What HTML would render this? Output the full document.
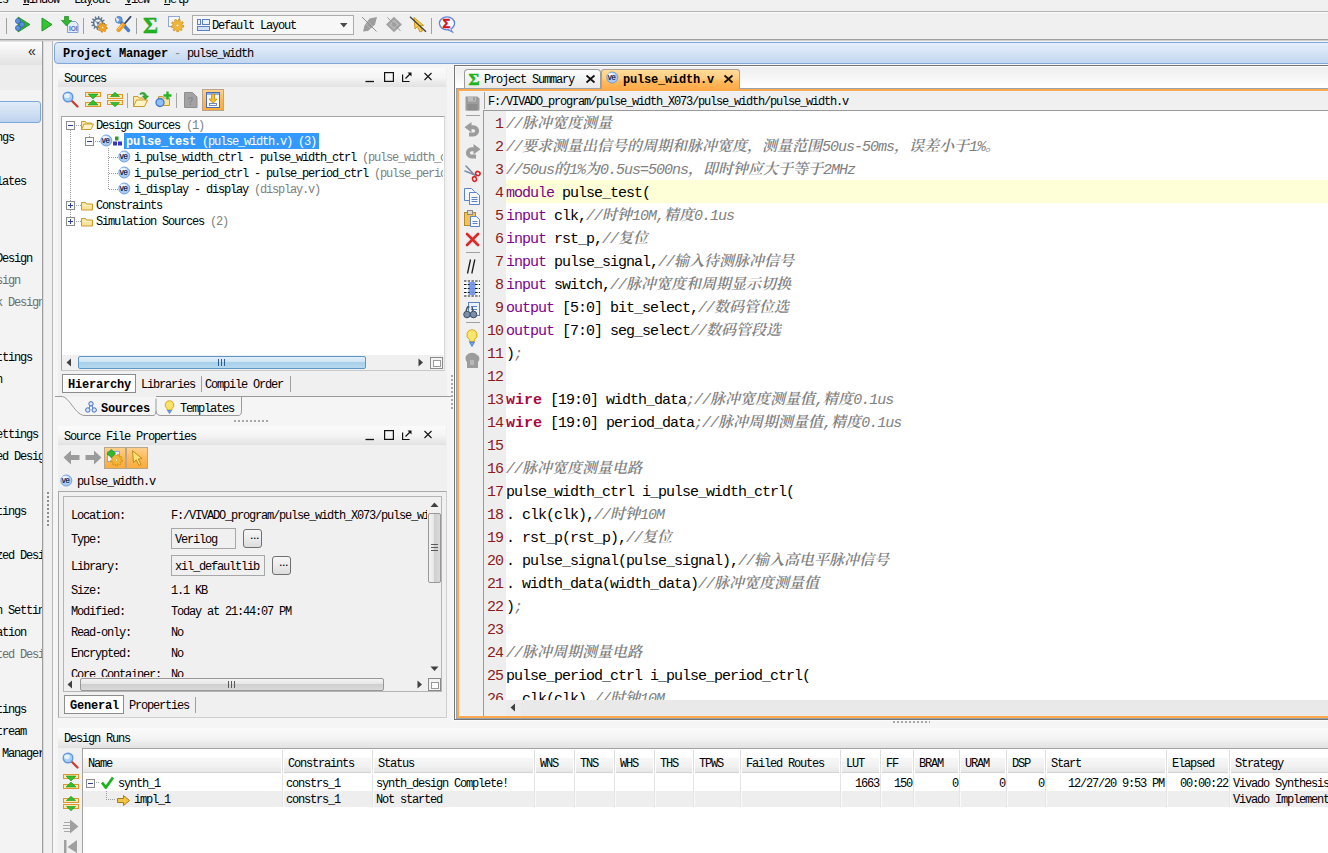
<!DOCTYPE html>
<html lang="zh"><head><meta charset="utf-8"><title>Vivado - pulse_width</title>
<style>
html,body{margin:0;padding:0}
body{width:1328px;height:853px;overflow:hidden;background:#f0f0f0;position:relative;
 font-family:"Liberation Mono","Noto Serif CJK SC",monospace;font-size:12px;color:#000}
#root{position:absolute;left:0;top:0;width:1328px;height:853px;overflow:hidden}
#root div,#root svg,#root span.a{position:absolute;box-sizing:border-box}
.t{margin-top:-1px;font:12px/12px "Liberation Mono","Noto Serif CJK SC",monospace;letter-spacing:-1.2px;white-space:pre;color:#000}
.t.b,.t .b{font-weight:bold;letter-spacing:-0.2px}
.g{color:#808080}
.c{font:15px/23px "Liberation Mono","Noto Serif CJK SC",monospace;letter-spacing:-1px;white-space:pre;color:#000}
.c i{color:#808080}
.c b{color:#800090;font-weight:normal}
.c em{color:#a8093f;font-weight:bold;font-style:normal}
.ln{font:15px/23px "Liberation Mono",monospace;letter-spacing:-1px;color:#8b1a1a;text-align:right;white-space:pre}

.c u{text-decoration:none;letter-spacing:0;font-weight:600}
.c s{text-decoration:none;color:#808080;font-style:italic}
.c em{letter-spacing:0}
</style></head>
<body><div id="root">
<!-- top -->
<div style="left:0px;top:0px;width:1328px;height:11px;background:#f0f0f0;overflow:hidden"><div class="t" style="left:-4px;top:-5px;">ts</div><div class="t" style="left:23px;top:-5px;"><u>W</u>indow</div><div class="t" style="left:74px;top:-5px;">La<u>y</u>out</div><div class="t" style="left:125px;top:-5px;"><u>V</u>iew</div><div class="t" style="left:164px;top:-5px;"><u>H</u>elp</div></div>
<div style="left:0px;top:11px;width:1328px;height:1px;background:#b4b4b4"></div>
<div style="left:0px;top:12px;width:1328px;height:1px;background:#fafafa"></div>
<div style="left:0px;top:13px;width:1328px;height:26px;background:#f0f0f0"></div>
<div style="left:0px;top:39px;width:1328px;height:1px;background:#a0a0a0"></div>
<div style="left:0px;top:40px;width:1328px;height:1px;background:#cfcfcf"></div>
<div style="left:0px;top:41px;width:1328px;height:1px;background:#e3e3e3"></div>
<div style="left:6px;top:18px;width:1px;height:16px;background:#a0a0a0"></div>
<div style="left:83px;top:18px;width:1px;height:16px;background:#a0a0a0"></div>
<div style="left:136px;top:18px;width:1px;height:16px;background:#a0a0a0"></div>
<div style="left:431px;top:18px;width:1px;height:16px;background:#a0a0a0"></div>
<svg style="left:14px;top:16px" width="17" height="17" viewBox="0 0 17 17"><polygon points="4,1 16,8.5 4,16" fill="#2db52d" stroke="#1e8a1e" stroke-width="0.8"/>
<circle cx="4" cy="5" r="2.6" fill="#5b8fe0" stroke="#2a55a8" stroke-width="0.6"/><circle cx="8" cy="8.5" r="2.6" fill="#5b8fe0" stroke="#2a55a8" stroke-width="0.6"/><circle cx="4" cy="12" r="2.6" fill="#5b8fe0" stroke="#2a55a8" stroke-width="0.6"/></svg>
<svg style="left:41px;top:17px" width="12" height="15" viewBox="0 0 12 15"><polygon points="1,1 11,7.5 1,14" fill="#36c336" stroke="#1f9a1f" stroke-width="1"/></svg>
<svg style="left:61px;top:16px" width="18" height="17" viewBox="0 0 18 17"><path d="M6.500,5.500 h8 l2.500,2.500 v8.500 h-10.500z" fill="#e4edfb" stroke="#7f9fd6" stroke-width="1"/>
<text x="8" y="15" font-size="6.500" font-family="Liberation Sans,sans-serif" fill="#4a6fc0" font-weight="bold">IOI</text>
<path d="M3.5,0.5 h4 v4 h3 l-5,5.5 l-5,-5.5 h3z" fill="#2fb52f" stroke="#1c8a1c" stroke-width="0.7"/></svg>
<svg style="left:91px;top:16px" width="17" height="17" viewBox="0 0 17 17"><path d="M14.00,7.00 L13.85,8.46 L12.02,8.35 L11.53,9.55 L13.06,10.50 L12.20,11.68 L10.68,10.68 L9.65,11.48 L10.50,13.06 L9.16,13.66 L8.35,12.02 L7.05,12.20 L7.00,14.00 L5.54,13.85 L5.65,12.02 L4.45,11.53 L3.50,13.06 L2.32,12.20 L3.32,10.68 L2.52,9.65 L0.94,10.50 L0.34,9.16 L1.98,8.35 L1.80,7.05 L0.00,7.00 L0.15,5.54 L1.98,5.65 L2.47,4.45 L0.94,3.50 L1.80,2.32 L3.32,3.32 L4.35,2.52 L3.50,0.94 L4.84,0.34 L5.65,1.98 L6.95,1.80 L7.00,0.00 L8.46,0.15 L8.35,1.98 L9.55,2.47 L10.50,0.94 L11.68,1.80 L10.68,3.32 L11.48,4.35 L13.06,3.50 L13.66,4.84 L12.02,5.65 L12.20,6.95z" fill="#5f7890"/><circle cx="7" cy="7" r="3.600" fill="#eef1f4"/><circle cx="7" cy="7" r="1.300" fill="#5f7890"/><path d="M7,7 L3,4 M7,7 L11,4 M7,7 L7,12" stroke="#5f7890" stroke-width="0.900"/><path d="M16.30,11.50 L16.07,12.98 L14.83,12.88 L14.09,14.01 L14.89,14.89 L13.68,15.78 L12.88,14.83 L11.56,15.10 L11.50,16.30 L10.02,16.07 L10.12,14.83 L8.99,14.09 L8.11,14.89 L7.22,13.68 L8.17,12.88 L7.90,11.56 L6.70,11.50 L6.93,10.02 L8.17,10.12 L8.91,8.99 L8.11,8.11 L9.32,7.22 L10.12,8.17 L11.44,7.90 L11.50,6.70 L12.98,6.93 L12.88,8.17 L14.01,8.91 L14.89,8.11 L15.78,9.32 L14.83,10.12 L15.10,11.44z" fill="#f5a21c" stroke="#c87406" stroke-width="0.600"/><circle cx="11.500" cy="11.500" r="1.200" fill="#fff0c0" stroke="#c87406" stroke-width="0.500"/></svg>
<svg style="left:115px;top:16px" width="17" height="17" viewBox="0 0 17 17"><path d="M4.500,4.500 L13.500,14.500" stroke="#4f7fc4" stroke-width="3.400" stroke-linecap="round"/>
<circle cx="3.800" cy="3.800" r="3.400" fill="#6a9ae0" stroke="#3b66ad" stroke-width="0.700"/><path d="M0.500,0.500 L4.300,3.800 L2,6.500z" fill="#f0f0f0"/>
<path d="M15.500,0.800 L8.500,9" stroke="#33486b" stroke-width="1.800" stroke-linecap="round"/>
<path d="M8,9 L3.500,14" stroke="#f59b1e" stroke-width="4.200" stroke-linecap="round"/><path d="M7.200,8.600 L3.300,13" stroke="#ffd089" stroke-width="1" stroke-linecap="round"/></svg>
<svg style="left:142px;top:14px" width="20" height="22" viewBox="0 0 20 22"><text x="1" y="19" font-size="23" font-weight="bold" font-family="Liberation Serif,serif" fill="#1fb61f" stroke="#179a17" stroke-width="0.400">Σ</text></svg>
<svg style="left:167px;top:16px" width="18" height="17" viewBox="0 0 18 17"><rect x="1.500" y="0.500" width="11" height="10" fill="#f6f8fd" stroke="#8fa6d6"/><path d="M16.80,9.50 L16.56,11.24 L14.92,11.11 L14.14,12.47 L15.33,13.55 L14.02,14.72 L12.85,13.57 L11.38,14.12 L11.59,15.70 L9.84,15.77 L9.68,14.13 L8.21,13.60 L7.35,14.96 L5.97,13.88 L6.90,12.52 L6.11,11.17 L4.58,11.65 L4.22,9.94 L5.80,9.50 L6.06,7.95 L4.58,7.35 L5.40,5.80 L6.90,6.48 L8.09,5.46 L7.35,4.04 L8.98,3.39 L9.68,4.87 L11.25,4.86 L11.59,3.30 L13.26,3.84 L12.85,5.43 L14.06,6.43 L15.33,5.45 L16.26,6.94 L14.92,7.89 L15.20,9.43z" fill="#f2b736" stroke="#c98d12" stroke-width="0.700"/><circle cx="10.500" cy="9.500" r="1.400" fill="#fff3c4" stroke="#c98d12" stroke-width="0.500"/></svg>
<div style="left:192px;top:15px;width:162px;height:20px;border:1px solid #ababab;background:#f7f7f7"></div>
<svg style="left:197px;top:19px" width="13" height="12" viewBox="0 0 13 12"><rect x="0.5" y="0.5" width="3" height="5" fill="#eaf1fb" stroke="#5b7fc0"/><rect x="5.5" y="0.5" width="7" height="5" fill="#eaf1fb" stroke="#5b7fc0"/><rect x="0.5" y="7.5" width="12" height="4" fill="#cfe2f8" stroke="#5b7fc0"/></svg>
<div class="t" style="left:212px;top:21px;">Default Layout</div>
<svg style="left:340px;top:23px" width="8" height="5" viewBox="0 0 8 5"><polygon points="0,0 7.500,0 3.750,4.500" fill="#4a4a4a"/></svg>
<svg style="left:361px;top:16px" width="18" height="17" viewBox="0 0 18 17"><path d="M8.500,2.500 L16,1 L14,8.500 L7,15 L2,15.500 L3.500,9.500z" fill="#9d9d9d"/><path d="M5,8 L9,12 M7,5.500 L11.500,10" stroke="#b9b9b9" stroke-width="0.800"/><path d="M1,1 L15.500,15.500" stroke="#8f8f8f" stroke-width="1"/></svg>
<svg style="left:385px;top:16px" width="18" height="17" viewBox="0 0 18 17"><path d="M9,0.800 L17,8.500 L9,16.200 L1,8.500z" fill="#a2a2a2"/><path d="M9,4.500 L13,8.500 L9,12.500 L5,8.500z" fill="none" stroke="#bcbcbc" stroke-width="1.200"/><path d="M2.500,1.500 L15.500,15" stroke="#9a9a9a" stroke-width="1"/></svg>
<svg style="left:409px;top:16px" width="18" height="17" viewBox="0 0 18 17"><path d="M5,1.500 L6,13 L8.500,10.500 L11,16 L13.500,15 L11,9.800 L14.500,9.500z" fill="#f9cf4e" stroke="#c58f10" stroke-width="0.900"/><path d="M1,0.800 L17,15.800" stroke="#3f3f3f" stroke-width="1.300"/></svg>
<svg style="left:437px;top:15px" width="20" height="19" viewBox="0 0 20 19"><path d="M12.500,12.500 L15.500,17 L9.500,14z" fill="#e8f0fc" stroke="#5f86d6" stroke-width="1.100"/><ellipse cx="10" cy="8.300" rx="7.600" ry="6.500" fill="#f6f9ff" stroke="#5f86d6" stroke-width="1.300"/><path d="M11,13.500 L14,15.500 L13,12.500z" fill="#f6f9ff"/><text x="5.500" y="13" font-size="13" font-weight="bold" font-family="Liberation Sans,sans-serif" fill="#d2101e" stroke="#d2101e" stroke-width="0.500">Σ</text></svg>
<!-- leftnav -->
<div style="left:0px;top:42px;width:42px;height:811px;background:#f3f3f3"></div>
<div style="left:0px;top:42px;width:42px;height:23px;background:linear-gradient(#fdfdfd,#e2e2e2)"></div>
<div style="left:0px;top:65px;width:42px;height:25px;background:#ededed"></div>
<div class="t" style="left:28px;top:46px;font:14px/12px Liberation Sans,sans-serif;letter-spacing:0;color:#222">«</div>
<div style="left:42px;top:41px;width:1px;height:812px;background:#9c9c9c"></div>
<div style="left:43px;top:41px;width:1px;height:812px;background:#dcdcdc"></div>
<div style="left:52px;top:41px;width:1px;height:812px;background:#b9b9b9"></div>
<div style="left:53px;top:41px;width:1px;height:812px;background:#e4e4e4"></div>
<div style="left:47px;top:492px;width:2px;height:35px;background-image:linear-gradient(#8f8f8f 50%,transparent 50%);background-size:2px 4px"></div>
<div style="left:-6px;top:101px;width:47px;height:22px;border:1px solid #7da6da;border-radius:3px;background:linear-gradient(#e0ebf8,#cfdff3 55%,#bdd3ee)"></div>
<div style="left:0px;top:42px;width:42px;height:811px;overflow:hidden"><div class="t" style="left:-82px;top:91px;">Project Settings</div><div class="t" style="left:-82px;top:113px;">Add Sources</div><div class="t" style="left:-82px;top:135px;">Language Templates</div><div class="t" style="left:-82px;top:157px;">IP Catalog</div><div class="t" style="left:-82px;top:212px;">Create Block Design</div><div class="t" style="left:-82px;top:234px;color:#6e6e6e">Open Block Design</div><div class="t" style="left:-82px;top:256px;color:#6e6e6e">Generate Block Design</div><div class="t" style="left:-82px;top:311px;">Simulation Settings</div><div class="t" style="left:-82px;top:333px;">Run Simulation</div><div class="t" style="left:-82px;top:388px;">Elaboration Settings</div><div class="t" style="left:-82px;top:410px;">Open Elaborated Design</div><div class="t" style="left:-82px;top:465px;">Synthesis Settings</div><div class="t" style="left:-82px;top:487px;">Run Synthesis</div><div class="t" style="left:-82px;top:509px;">Open Synthesized Design</div><div class="t" style="left:-82px;top:564px;">Implementation Settings</div><div class="t" style="left:-82px;top:586px;">Run Implementation</div><div class="t" style="left:-82px;top:608px;color:#6e6e6e">Open Implemented Design</div><div class="t" style="left:-82px;top:663px;">Bitstream Settings</div><div class="t" style="left:-82px;top:685px;">Generate Bitstream</div><div class="t" style="left:-82px;top:707px;">Open Hardware Manager</div></div>
<!-- pm -->
<div style="left:53px;top:41px;width:1275px;height:812px;background:#f5f5f5"></div>
<div style="left:58px;top:68px;width:389px;height:329px;background:#f0f0f0"></div>
<div style="left:58px;top:426px;width:389px;height:292px;background:#f0f0f0"></div>
<div style="left:58px;top:728px;width:1270px;height:125px;background:#f0f0f0"></div>
<div style="left:54px;top:42px;width:1290px;height:22px;border:1px solid #7fa7da;border-radius:4px;background:linear-gradient(#e6effb 0%,#d6e4f6 45%,#c3d7f0 100%)"></div>
<div class="t b" style="left:63px;top:49px;">Project Manager</div>
<div class="t" style="left:174px;top:49px;color:#8a8a8a">-</div>
<div class="t" style="left:187px;top:49px;">pulse_width</div>
<!-- sources -->
<div style="left:58px;top:68px;width:388px;height:19px;background:linear-gradient(#fbfbfb,#f4f4f4 50%,#e2e2e2)"></div>
<div class="t" style="left:64px;top:74px;">Sources</div>
<svg style="left:365px;top:71px" width="68" height="12" viewBox="0 0 68 12"><path d="M0.500,10.500 h8.500" stroke="#111" stroke-width="1.300" fill="none"/>
<rect x="19.6" y="1.6" width="8.8" height="8.8" fill="none" stroke="#111" stroke-width="1.2"/>
<path d="M37.600,3.500 v7 h7" stroke="#111" stroke-width="1.2" fill="none"/><path d="M40.500,7.500 L45.500,2.500" stroke="#111" stroke-width="1.3"/><path d="M42.500,1.500 h4 v4z" fill="#111"/>
<path d="M59.500,2 l7,7 M66.500,2 l-7,7" stroke="#111" stroke-width="1.1"/></svg>
<svg style="left:62px;top:91px" width="17" height="17" viewBox="0 0 17 17"><path d="M9,9 L15.500,15.500" stroke="#cf3a2a" stroke-width="2.200" stroke-linecap="round"/><circle cx="6" cy="6" r="4.800" fill="#a6cef8" stroke="#5f97e2" stroke-width="1.400"/><ellipse cx="5" cy="4.800" rx="2.800" ry="2.400" fill="#e4f1ff"/></svg>
<svg style="left:85px;top:92px" width="16" height="16" viewBox="0 0 16 16"><rect x="0.500" y="0.500" width="15" height="4" fill="#fde9ae" stroke="#e0962a"/><rect x="0.500" y="10.500" width="15" height="4" fill="#fde9ae" stroke="#e0962a"/><polygon points="3,2 13,2 8,7" fill="#2fc12f" stroke="#1d961d" stroke-width="0.600"/><polygon points="3,13 13,13 8,8" fill="#2fc12f" stroke="#1d961d" stroke-width="0.600"/></svg>
<svg style="left:107px;top:92px" width="16" height="16" viewBox="0 0 16 16"><rect x="0.500" y="2.500" width="15" height="4" fill="#fde9ae" stroke="#e0962a"/><rect x="0.500" y="8.500" width="15" height="4" fill="#fde9ae" stroke="#e0962a"/><polygon points="3.500,4.500 12.500,4.500 8,0.300" fill="#2fc12f" stroke="#1d961d" stroke-width="0.600"/><polygon points="3.500,10.500 12.500,10.500 8,14.800" fill="#2fc12f" stroke="#1d961d" stroke-width="0.600"/></svg>
<div style="left:127px;top:93px;width:1px;height:15px;background:#a6a6a6"></div>
<svg style="left:133px;top:91px" width="18" height="17" viewBox="0 0 18 17"><path d="M0.5,15.500 v-10 h4.500 l1,1.500 h6 v2" fill="#fbe9a6" stroke="#c99a2e"/><path d="M0.5,15.500 l3,-6.500 h11 l-3,6.500z" fill="#fff3c4" stroke="#c99a2e"/><path d="M7,2.500 c3,-2 6,-1 6.500,2.500 h2 l-3,3.500 l-3,-3.500 h2 c-0.500,-2 -2.500,-2.500 -4.500,-1.500z" fill="#2fb52f" stroke="#1c8a1c" stroke-width="0.6"/></svg>
<svg style="left:155px;top:91px" width="19" height="17" viewBox="0 0 19 17"><path d="M3.500,14.500 v-9 h4 l1,1.500 h6 v7.500z" fill="#fbe39a" stroke="#c99a2e"/><circle cx="5" cy="11.500" r="4" fill="#8fc0f5" stroke="#3f78d0" stroke-width="1.300"/><path d="M12.500,0.500 v8 M8.500,4.500 h8" stroke="#26b526" stroke-width="2.400"/></svg>
<div style="left:176px;top:93px;width:1px;height:15px;background:#a6a6a6"></div>
<svg style="left:184px;top:92px" width="14" height="16" viewBox="0 0 14 16"><path d="M0.5,0.500 h8 l4.500,4.500 v10.500 h-12.500z" fill="#a3a3a3" stroke="#8f8f8f"/><text x="3.200" y="12.500" font-size="10" font-weight="bold" font-family="Liberation Sans,sans-serif" fill="#8b8b8b">?</text></svg>
<div style="left:202px;top:89px;width:22px;height:22px;border:1px solid #b9a58a;background:linear-gradient(#ffd08a,#fdb95a 50%,#fbab3c)"></div>
<svg style="left:206px;top:92px" width="14" height="16" viewBox="0 0 14 16"><rect x="0.5" y="0.5" width="13" height="15" fill="#f8fbff" stroke="#4b6fb5"/><rect x="1" y="1" width="12" height="2" fill="#8fb0e6"/><path d="M5.500,2 h3 v5 h2.500 l-4,4.500 l-4,-4.500 h2.500z" fill="#f5c02a" stroke="#b98608" stroke-width="0.7"/><rect x="3.500" y="11.500" width="7" height="2" fill="#fff" stroke="#4b6fb5" stroke-width="0.8"/></svg>
<div style="left:61px;top:116px;width:384px;height:255px;background:#fff;border:1px solid #a5a5a5;border-right-color:#d8d8d8;border-bottom-color:#c8c8c8"></div>
<div style="left:70px;top:130px;width:1px;height:92px;background-image:linear-gradient(#9a9a9a 50%,transparent 50%);background-size:1px 2px"></div>
<div style="left:76px;top:125px;width:5px;height:1px;background-image:linear-gradient(90deg,#9a9a9a 50%,transparent 50%);background-size:2px 1px"></div>
<div style="left:76px;top:205px;width:5px;height:1px;background-image:linear-gradient(90deg,#9a9a9a 50%,transparent 50%);background-size:2px 1px"></div>
<div style="left:76px;top:221px;width:5px;height:1px;background-image:linear-gradient(90deg,#9a9a9a 50%,transparent 50%);background-size:2px 1px"></div>
<div style="left:89px;top:134px;width:1px;height:3px;background-image:linear-gradient(#9a9a9a 50%,transparent 50%);background-size:1px 2px"></div>
<div style="left:95px;top:141px;width:5px;height:1px;background-image:linear-gradient(90deg,#9a9a9a 50%,transparent 50%);background-size:2px 1px"></div>
<div style="left:108px;top:148px;width:1px;height:42px;background-image:linear-gradient(#9a9a9a 50%,transparent 50%);background-size:1px 2px"></div>
<div style="left:109px;top:157px;width:9px;height:1px;background-image:linear-gradient(90deg,#9a9a9a 50%,transparent 50%);background-size:2px 1px"></div>
<div style="left:109px;top:173px;width:9px;height:1px;background-image:linear-gradient(90deg,#9a9a9a 50%,transparent 50%);background-size:2px 1px"></div>
<div style="left:109px;top:189px;width:9px;height:1px;background-image:linear-gradient(90deg,#9a9a9a 50%,transparent 50%);background-size:2px 1px"></div>
<svg style="left:66px;top:121px" width="9" height="9" viewBox="0 0 9 9"><rect x="0.5" y="0.5" width="8" height="8" fill="#fafafa" stroke="#8c8c8c"/><path d="M2,4.500 h5" stroke="#2f3f8f"/></svg>
<svg style="left:81px;top:120px" width="13" height="11" viewBox="0 0 13 11"><path d="M0.500,9.500 v-8 h4 l1,1.500 h5 v2" fill="#fbe9a6" stroke="#c99a2e"/><path d="M0.500,9.500 l2.500,-5.500 h9.500 l-2.500,5.500z" fill="#fff3c4" stroke="#c99a2e"/></svg>
<div class="t" style="left:96px;top:121px;">Design Sources <span class="g">(1)</span></div>
<svg style="left:85px;top:137px" width="9" height="9" viewBox="0 0 9 9"><rect x="0.5" y="0.5" width="8" height="8" fill="#fafafa" stroke="#8c8c8c"/><path d="M2,4.500 h5" stroke="#2f3f8f"/></svg>
<svg style="left:100px;top:134px" width="13" height="13" viewBox="0 0 13 13"><circle cx="6.300" cy="6.500" r="5.500" fill="#a9cbf3" stroke="#5b8fd8" stroke-width="0.800"/>
<ellipse cx="5.300" cy="5" rx="3.800" ry="3.200" fill="#dcebfc"/><ellipse cx="4.800" cy="4.300" rx="2.300" ry="1.800" fill="#f3f8ff"/>
<text x="1.500" y="9.200" font-size="8.200" font-family="Liberation Sans,sans-serif" font-weight="bold" fill="#22335a" letter-spacing="-0.700">ve</text></svg>
<svg style="left:113px;top:136px" width="10" height="10" viewBox="0 0 10 10"><rect x="2" y="0.500" width="3.500" height="4" fill="#2aa02a"/><rect x="0" y="5.500" width="4" height="4" fill="#3b35c4"/><rect x="5" y="5.500" width="4" height="4" fill="#3b35c4"/></svg>
<div style="left:124px;top:133px;width:195px;height:16px;background:#3399ff"></div>
<div class="t" style="left:126px;top:137px;color:#fff"><b style="letter-spacing:-0.2px">pulse_test</b> (pulse_width.v) (3)</div>
<svg style="left:118px;top:150px" width="13" height="13" viewBox="0 0 13 13"><circle cx="6.300" cy="6.500" r="5.500" fill="#a9cbf3" stroke="#5b8fd8" stroke-width="0.800"/>
<ellipse cx="5.300" cy="5" rx="3.800" ry="3.200" fill="#dcebfc"/><ellipse cx="4.800" cy="4.300" rx="2.300" ry="1.800" fill="#f3f8ff"/>
<text x="1.500" y="9.200" font-size="8.200" font-family="Liberation Sans,sans-serif" font-weight="bold" fill="#22335a" letter-spacing="-0.700">ve</text></svg>
<div class="t" style="left:134px;top:153px;width:309px;overflow:hidden">i_pulse_width_ctrl - pulse_width_ctrl <span class="g">(pulse_width_ctrl.v)</span></div>
<svg style="left:118px;top:166px" width="13" height="13" viewBox="0 0 13 13"><circle cx="6.300" cy="6.500" r="5.500" fill="#a9cbf3" stroke="#5b8fd8" stroke-width="0.800"/>
<ellipse cx="5.300" cy="5" rx="3.800" ry="3.200" fill="#dcebfc"/><ellipse cx="4.800" cy="4.300" rx="2.300" ry="1.800" fill="#f3f8ff"/>
<text x="1.500" y="9.200" font-size="8.200" font-family="Liberation Sans,sans-serif" font-weight="bold" fill="#22335a" letter-spacing="-0.700">ve</text></svg>
<div class="t" style="left:134px;top:169px;width:309px;overflow:hidden">i_pulse_period_ctrl - pulse_period_ctrl <span class="g">(pulse_period_ctrl.v)</span></div>
<svg style="left:118px;top:182px" width="13" height="13" viewBox="0 0 13 13"><circle cx="6.300" cy="6.500" r="5.500" fill="#a9cbf3" stroke="#5b8fd8" stroke-width="0.800"/>
<ellipse cx="5.300" cy="5" rx="3.800" ry="3.200" fill="#dcebfc"/><ellipse cx="4.800" cy="4.300" rx="2.300" ry="1.800" fill="#f3f8ff"/>
<text x="1.500" y="9.200" font-size="8.200" font-family="Liberation Sans,sans-serif" font-weight="bold" fill="#22335a" letter-spacing="-0.700">ve</text></svg>
<div class="t" style="left:134px;top:185px;">i_display - display <span class="g">(display.v)</span></div>
<svg style="left:66px;top:201px" width="9" height="9" viewBox="0 0 9 9"><rect x="0.5" y="0.5" width="8" height="8" fill="#fafafa" stroke="#8c8c8c"/><path d="M2,4.500 h5" stroke="#2f3f8f"/><path d="M4.500,2 v5" stroke="#2f3f8f"/></svg>
<svg style="left:81px;top:201px" width="13" height="10" viewBox="0 0 13 10"><path d="M0.500,9 v-7.500 h4 l1,1.500 h6 v6z" fill="#fbe39a" stroke="#c99a2e"/><path d="M1.500,4.500 h9" stroke="#fff6d4"/></svg>
<div class="t" style="left:96px;top:201px;">Constraints</div>
<svg style="left:66px;top:217px" width="9" height="9" viewBox="0 0 9 9"><rect x="0.5" y="0.5" width="8" height="8" fill="#fafafa" stroke="#8c8c8c"/><path d="M2,4.500 h5" stroke="#2f3f8f"/><path d="M4.500,2 v5" stroke="#2f3f8f"/></svg>
<svg style="left:81px;top:217px" width="13" height="10" viewBox="0 0 13 10"><path d="M0.500,9 v-7.500 h4 l1,1.500 h6 v6z" fill="#fbe39a" stroke="#c99a2e"/><path d="M1.500,4.500 h9" stroke="#fff6d4"/></svg>
<div class="t" style="left:96px;top:217px;">Simulation Sources <span class="g">(2)</span></div>
<div style="left:62px;top:355px;width:382px;height:15px;background:#f0f0f0"></div>
<svg style="left:66px;top:358px" width="6" height="9" viewBox="0 0 6 9"><polygon points="5,0.500 5,8.500 0.500,4.500" fill="#404040"/></svg>
<div style="left:78px;top:356px;width:288px;height:13px;border:1px solid #5b97c6;border-radius:2px;background:linear-gradient(#e2eff9,#cfe4f4 45%,#a8d0ea 50%,#b6d9ef)"></div>
<svg style="left:217px;top:359px" width="10" height="7" viewBox="0 0 10 7"><path d="M1.500,0 v7 M4.500,0 v7 M7.500,0 v7" stroke="#2d5d8c"/></svg>
<svg style="left:418px;top:358px" width="6" height="9" viewBox="0 0 6 9"><polygon points="0.500,0.500 0.500,8.500 5,4.500" fill="#404040"/></svg>
<div style="left:430px;top:357px;width:13px;height:12px;border:1px solid #8a8a8a;background:#f4f4f4"></div>
<div style="left:433px;top:360px;width:8px;height:7px;border:1px solid #9a9a9a;background:#fff"></div>
<div style="left:62px;top:374px;width:74px;height:19px;background:#fff;border:1px solid #8c8c8c"></div>
<div class="t b" style="left:68px;top:380px;">Hierarchy</div>
<div class="t" style="left:141px;top:380px;">Libraries</div>
<div style="left:201px;top:376px;width:1px;height:16px;background:#a0a0a0"></div>
<div class="t" style="left:205px;top:380px;">Compile Order</div>
<div style="left:290px;top:376px;width:1px;height:16px;background:#a0a0a0"></div>
<svg style="left:55px;top:394px" width="400" height="24" viewBox="0 0 400 24"><path d="M0,2.500 H6 C10,2.500 12,5 16,10 S24,21.500 30,21.500 H98 C100,21.500 101,20 101,17 V4.500" fill="none" stroke="#9a9a9a"/>
<path d="M101,17 C101,20 103,21.500 106,21.500 H183 C185.500,21.500 186.500,20 186.500,17 V2.500" fill="none" stroke="#9a9a9a"/>
<path d="M101,2.500 H396" stroke="#9a9a9a" fill="none"/></svg>
<svg style="left:85px;top:401px" width="12" height="12" viewBox="0 0 12 12"><path d="M6,3 L3,9 M6,3 L9,9" stroke="#3f6fc0"/><circle cx="6" cy="2.800" r="2.200" fill="#dbe9fb" stroke="#3f6fc0"/><circle cx="2.800" cy="9" r="2.200" fill="#dbe9fb" stroke="#3f6fc0"/><circle cx="9.200" cy="9" r="2.200" fill="#dbe9fb" stroke="#3f6fc0"/></svg>
<div class="t b" style="left:101px;top:404px;">Sources</div>
<svg style="left:164px;top:400px" width="11" height="14" viewBox="0 0 11 14"><path d="M5.500,0.700 a4.300,4.300 0 0 1 2.500,7.800 v1.500 h-5 v-1.500 a4.300,4.300 0 0 1 2.500,-7.800z" fill="#fbe36a" stroke="#d8a820"/><path d="M3.500,10.500 h4 l-2,3z" fill="#6aa3e8" stroke="#3f78d0" stroke-width="0.7"/></svg>
<div class="t" style="left:180px;top:404px;">Templates</div>
<div style="left:234px;top:420px;width:35px;height:2px;background-image:linear-gradient(90deg,#a8a8a8 50%,transparent 50%);background-size:4px 2px"></div>
<div style="left:451px;top:375px;width:2px;height:35px;background-image:linear-gradient(#a8a8a8 50%,transparent 50%);background-size:2px 4px"></div>
<!-- props -->
<div style="left:58px;top:426px;width:388px;height:19px;background:linear-gradient(#fbfbfb,#f4f4f4 50%,#e2e2e2)"></div>
<div class="t" style="left:64px;top:432px;">Source File Properties</div>
<svg style="left:365px;top:429px" width="68" height="12" viewBox="0 0 68 12"><path d="M0.500,10.500 h8.500" stroke="#111" stroke-width="1.300" fill="none"/>
<rect x="19.6" y="1.6" width="8.8" height="8.8" fill="none" stroke="#111" stroke-width="1.2"/>
<path d="M37.600,3.500 v7 h7" stroke="#111" stroke-width="1.2" fill="none"/><path d="M40.500,7.500 L45.500,2.500" stroke="#111" stroke-width="1.3"/><path d="M42.500,1.500 h4 v4z" fill="#111"/>
<path d="M59.500,2 l7,7 M66.500,2 l-7,7" stroke="#111" stroke-width="1.1"/></svg>
<svg style="left:63px;top:450px" width="17" height="15" viewBox="0 0 17 15"><path d="M0.5,7.500 L8,0.500 V5 H16.500 V10 H8 V14.500z" fill="#9b9b9b"/></svg>
<svg style="left:85px;top:450px" width="17" height="15" viewBox="0 0 17 15"><path d="M16.500,7.500 L9,0.500 V5 H0.5 V10 H9 V14.500z" fill="#9b9b9b"/></svg>
<div style="left:104px;top:447px;width:22px;height:22px;border:1px solid #b9a58a;background:linear-gradient(#ffd08a,#fdb95a 50%,#fbab3c)"></div>
<div style="left:126px;top:447px;width:22px;height:22px;border:1px solid #b9a58a;background:linear-gradient(#ffd08a,#fdb95a 50%,#fbab3c)"></div>
<svg style="left:106px;top:449px" width="18" height="18" viewBox="0 0 18 18"><rect x="1.500" y="2.500" width="12" height="10" fill="#f4f7fd" stroke="#8fa6d6"/><path d="M16.50,11.00 L16.27,12.65 L14.73,12.54 L13.99,13.84 L15.10,14.86 L13.86,15.97 L12.75,14.90 L11.34,15.42 L11.54,16.91 L9.87,16.97 L9.72,15.43 L8.30,14.93 L7.50,16.20 L6.18,15.17 L7.05,13.89 L6.29,12.60 L4.86,13.05 L4.51,11.42 L6.00,11.00 L6.25,9.52 L4.86,8.95 L5.65,7.47 L7.05,8.11 L8.20,7.13 L7.50,5.80 L9.05,5.18 L9.72,6.57 L11.22,6.56 L11.54,5.09 L13.13,5.61 L12.75,7.10 L13.91,8.06 L15.10,7.14 L15.98,8.56 L14.73,9.46 L15.00,10.94z" fill="#f2b736" stroke="#c98d12" stroke-width="0.700"/><circle cx="10.500" cy="11" r="1.300" fill="#fff3c4" stroke="#c98d12" stroke-width="0.500"/><path d="M5,0.500 L9.500,4 L5.500,8.500 L1,5z" fill="#2dbb2d" stroke="#178a17" stroke-width="0.700"/></svg>
<svg style="left:131px;top:450px" width="13" height="17" viewBox="0 0 13 17"><path d="M1.500,0.800 L2.500,12.500 L5.300,9.800 L8,15.500 L10,14.500 L7.300,9 L11,8.500z" fill="#ffe27a" stroke="#b8860b" stroke-width="0.900"/></svg>
<svg style="left:60px;top:474px" width="13" height="13" viewBox="0 0 13 13"><circle cx="6.300" cy="6.500" r="5.500" fill="#a9cbf3" stroke="#5b8fd8" stroke-width="0.800"/>
<ellipse cx="5.300" cy="5" rx="3.800" ry="3.200" fill="#dcebfc"/><ellipse cx="4.800" cy="4.300" rx="2.300" ry="1.800" fill="#f3f8ff"/>
<text x="1.500" y="9.200" font-size="8.200" font-family="Liberation Sans,sans-serif" font-weight="bold" fill="#22335a" letter-spacing="-0.700">ve</text></svg>
<div class="t" style="left:77px;top:477px;">pulse_width.v</div>
<div style="left:58px;top:491px;width:389px;height:227px;border:1px solid #a9a9a9;border-right-color:#cfcfcf;border-bottom-color:#cfcfcf;background:#f0f0f0"></div>
<div style="left:63px;top:496px;width:379px;height:196px;border:1px solid #b4b4b4;background:#f0f0f0"></div>
<div style="left:64px;top:497px;width:363px;height:180px;overflow:hidden"><div class="t" style="left:7px;top:14px;">Location:</div><div class="t" style="left:107px;top:14px;">F:/VIVADO_program/pulse_width_X073/pulse_width/pulse_width.v</div><div class="t" style="left:7px;top:38px;">Type:</div><div class="t" style="left:7px;top:65px;">Library:</div><div class="t" style="left:7px;top:89px;">Size:</div><div class="t" style="left:107px;top:89px;">1.1 KB</div><div class="t" style="left:7px;top:110px;">Modified:</div><div class="t" style="left:107px;top:110px;">Today at 21:44:07 PM</div><div class="t" style="left:7px;top:131px;">Read-only:</div><div class="t" style="left:107px;top:131px;">No</div><div class="t" style="left:7px;top:152px;">Encrypted:</div><div class="t" style="left:107px;top:152px;">No</div><div class="t" style="left:7px;top:173px;">Core Container:</div><div class="t" style="left:107px;top:173px;">No</div></div>
<div style="left:171px;top:528px;width:65px;height:21px;border:1px solid #a7a7a7;background:#f0f0f0"></div>
<div class="t" style="left:175px;top:535px;">Verilog</div>
<div style="left:171px;top:555px;width:94px;height:21px;border:1px solid #a7a7a7;background:#f0f0f0"></div>
<div class="t" style="left:175px;top:562px;">xil_defaultlib</div>
<div style="left:243px;top:529px;width:19px;height:19px;border:1px solid #707070;border-radius:3px;background:linear-gradient(#f6f6f6,#ececec 50%,#dcdcdc)"></div>
<div class="t" style="left:249px;top:532px;font-size:9px;letter-spacing:-2.400px;font-weight:bold">...</div>
<div style="left:272px;top:556px;width:19px;height:19px;border:1px solid #707070;border-radius:3px;background:linear-gradient(#f6f6f6,#ececec 50%,#dcdcdc)"></div>
<div class="t" style="left:278px;top:559px;font-size:9px;letter-spacing:-2.400px;font-weight:bold">...</div>
<div style="left:427px;top:497px;width:14px;height:180px;background:#f0f0f0"></div>
<svg style="left:430px;top:502px" width="9" height="6" viewBox="0 0 9 6"><polygon points="0.500,5 8.500,5 4.500,0.500" fill="#404040"/></svg>
<div style="left:428px;top:513px;width:13px;height:70px;border:1px solid #979797;border-radius:2px;background:linear-gradient(90deg,#f4f4f4,#e6e6e6 45%,#cfcfcf 50%,#dadada)"></div>
<svg style="left:431px;top:543px" width="7" height="10" viewBox="0 0 7 10"><path d="M0,1.500 h7 M0,4.500 h7 M0,7.500 h7" stroke="#5a5a5a"/></svg>
<svg style="left:430px;top:666px" width="9" height="6" viewBox="0 0 9 6"><polygon points="0.500,0.500 8.500,0.500 4.500,5" fill="#404040"/></svg>
<div style="left:64px;top:677px;width:377px;height:14px;background:#f0f0f0"></div>
<svg style="left:67px;top:680px" width="6" height="9" viewBox="0 0 6 9"><polygon points="5,0.500 5,8.500 0.500,4.500" fill="#404040"/></svg>
<div style="left:80px;top:678px;width:304px;height:13px;border:1px solid #979797;border-radius:2px;background:linear-gradient(#f4f4f4,#e6e6e6 45%,#cfcfcf 50%,#dadada)"></div>
<svg style="left:227px;top:681px" width="10" height="7" viewBox="0 0 10 7"><path d="M1.500,0 v7 M4.500,0 v7 M7.500,0 v7" stroke="#5a5a5a"/></svg>
<svg style="left:417px;top:680px" width="6" height="9" viewBox="0 0 6 9"><polygon points="0.500,0.500 0.500,8.500 5,4.500" fill="#404040"/></svg>
<div style="left:428px;top:678px;width:13px;height:13px;border:1px solid #8a8a8a;background:#f4f4f4"></div>
<div style="left:431px;top:682px;width:8px;height:7px;border:1px solid #9a9a9a;background:#fff"></div>
<div style="left:64px;top:695px;width:60px;height:19px;background:#fff;border:1px solid #8c8c8c"></div>
<div class="t b" style="left:70px;top:701px;">General</div>
<div class="t" style="left:129px;top:701px;">Properties</div>
<div style="left:195px;top:697px;width:1px;height:16px;background:#a0a0a0"></div>
<!-- editor -->
<div style="left:453px;top:65px;width:1px;height:656px;background:#fbfbfb"></div>
<div style="left:453px;top:720px;width:880px;height:1px;background:#fbfbfb"></div>
<div style="left:454px;top:65px;width:880px;height:655px;border:1px solid #747474;background:#f0f0f0"></div>
<div style="left:455px;top:66px;width:878px;height:22px;background:linear-gradient(#ffffff 0,#efefef 8%,#f4f4f4 45%,#ffffff 90%)"></div>
<div style="left:455px;top:66px;width:1px;height:653px;background:#fcfcfc"></div>
<div style="left:456px;top:88px;width:878px;height:631px;border:1px solid #9da1a9"></div>
<div style="left:457px;top:89px;width:877px;height:629px;border:2px solid #fba94c;background:#f0f0f0"></div>
<div style="left:459px;top:91px;width:875px;height:625px;border:1px solid #eef3fa"></div>
<div style="left:464px;top:69px;width:137px;height:19px;border:1px solid #9b9b9b;border-bottom:none;border-radius:4px 4px 0 0;background:linear-gradient(#fdfdfd,#f3f3f3 50%,#e9e9e9)"></div>
<svg style="left:467px;top:70px" width="16" height="16" viewBox="0 0 16 16"><text x="1.500" y="14.500" font-size="17" font-weight="bold" font-family="Liberation Serif,serif" fill="#1db31d" stroke="#1db31d" stroke-width="0.500">Σ</text></svg>
<div class="t" style="left:484px;top:75px;">Project Summary</div>
<svg style="left:585px;top:74px" width="11" height="10" viewBox="0 0 11 10"><path d="M1.500,1.500 l8,7 M9.500,1.500 l-8,7" stroke="#111" stroke-width="1.700"/></svg>
<div style="left:601px;top:69px;width:139px;height:20px;border:1px solid #a9a196;border-bottom:none;border-radius:3px 3px 0 0;background:linear-gradient(#ffdb98,#ffcd80 45%,#ffb95e 60%,#ffab48)"></div>
<svg style="left:606px;top:71px" width="13" height="13" viewBox="0 0 13 13"><circle cx="6.300" cy="6.500" r="5.500" fill="#a9cbf3" stroke="#5b8fd8" stroke-width="0.800"/>
<ellipse cx="5.300" cy="5" rx="3.800" ry="3.200" fill="#dcebfc"/><ellipse cx="4.800" cy="4.300" rx="2.300" ry="1.800" fill="#f3f8ff"/>
<text x="1.500" y="9.200" font-size="8.200" font-family="Liberation Sans,sans-serif" font-weight="bold" fill="#22335a" letter-spacing="-0.700">ve</text></svg>
<div class="t b" style="left:623px;top:75px;">pulse_width.v</div>
<svg style="left:723px;top:74px" width="11" height="10" viewBox="0 0 11 10"><path d="M1.500,1.500 l8,7 M9.500,1.500 l-8,7" stroke="#111" stroke-width="1.700"/></svg>
<div style="left:484px;top:92px;width:1px;height:17px;background:#a0a0a0"></div>
<div class="t" style="left:488px;top:97px;">F:/VIVADO_program/pulse_width_X073/pulse_width/pulse_width.v</div>
<div style="left:483px;top:110px;width:851px;height:606px;border-top:1px solid #9a9a9a;border-left:1px solid #9a9a9a;background:#fff"></div>
<div style="left:484px;top:111px;width:22px;height:605px;background:#eeeeee"></div>
<div style="left:506px;top:180px;width:830px;height:23px;background:#ffffd7"></div>
<div style="left:485px;top:111px;width:850px;height:589px;overflow:hidden"><div class="ln" style="left:0;top:2px;width:18px">1</div><div class="c" style="left:21px;top:2px"><i>//<u>脉冲宽度测量</u></i></div><div class="ln" style="left:0;top:25px;width:18px">2</div><div class="c" style="left:21px;top:25px"><i>//<u>要求测量出信号的周期和脉冲宽度，测量范围</u>50us-50ms<u>，误差小于</u>1%<u>。</u></i></div><div class="ln" style="left:0;top:48px;width:18px">3</div><div class="c" style="left:21px;top:48px"><i>//50us<u>的</u>1%<u>为</u>0.5us=500ns<u>，即时钟应大于等于</u>2MHz</i></div><div class="ln" style="left:0;top:71px;width:18px">4</div><div class="c" style="left:21px;top:71px"><b>module</b> pulse_test(</div><div class="ln" style="left:0;top:94px;width:18px">5</div><div class="c" style="left:21px;top:94px"><b>input</b> clk,<i>//<u>时钟</u>10M,<u>精度</u>0.1us</i></div><div class="ln" style="left:0;top:117px;width:18px">6</div><div class="c" style="left:21px;top:117px"><b>input</b> rst_p,<i>//<u>复位</u></i></div><div class="ln" style="left:0;top:140px;width:18px">7</div><div class="c" style="left:21px;top:140px"><b>input</b> pulse_signal,<i>//<u>输入待测脉冲信号</u></i></div><div class="ln" style="left:0;top:163px;width:18px">8</div><div class="c" style="left:21px;top:163px"><b>input</b> switch,<i>//<u>脉冲宽度和周期显示切换</u></i></div><div class="ln" style="left:0;top:186px;width:18px">9</div><div class="c" style="left:21px;top:186px"><b>output</b> [5:0] bit_select,<i>//<u>数码管位选</u></i></div><div class="ln" style="left:0;top:209px;width:18px">10</div><div class="c" style="left:21px;top:209px"><b>output</b> [7:0] seg_select<i>//<u>数码管段选</u></i></div><div class="ln" style="left:0;top:232px;width:18px">11</div><div class="c" style="left:21px;top:232px">)<s>;</s></div><div class="ln" style="left:0;top:255px;width:18px">12</div><div class="ln" style="left:0;top:278px;width:18px">13</div><div class="c" style="left:21px;top:278px"><em>wire</em> [19:0] width_data<s>;</s><i>//<u>脉冲宽度测量值</u>,<u>精度</u>0.1us</i></div><div class="ln" style="left:0;top:301px;width:18px">14</div><div class="c" style="left:21px;top:301px"><em>wire</em> [19:0] period_data<s>;</s><i>//<u>脉冲周期测量值</u>,<u>精度</u>0.1us</i></div><div class="ln" style="left:0;top:324px;width:18px">15</div><div class="ln" style="left:0;top:347px;width:18px">16</div><div class="c" style="left:21px;top:347px"><i>//<u>脉冲宽度测量电路</u></i></div><div class="ln" style="left:0;top:370px;width:18px">17</div><div class="c" style="left:21px;top:370px">pulse_width_ctrl i_pulse_width_ctrl(</div><div class="ln" style="left:0;top:393px;width:18px">18</div><div class="c" style="left:21px;top:393px">. clk(clk),<i>//<u>时钟</u>10M</i></div><div class="ln" style="left:0;top:416px;width:18px">19</div><div class="c" style="left:21px;top:416px">. rst_p(rst_p),<i>//<u>复位</u></i></div><div class="ln" style="left:0;top:439px;width:18px">20</div><div class="c" style="left:21px;top:439px">. pulse_signal(pulse_signal),<i>//<u>输入高电平脉冲信号</u></i></div><div class="ln" style="left:0;top:462px;width:18px">21</div><div class="c" style="left:21px;top:462px">. width_data(width_data)<i>//<u>脉冲宽度测量值</u></i></div><div class="ln" style="left:0;top:485px;width:18px">22</div><div class="c" style="left:21px;top:485px">)<s>;</s></div><div class="ln" style="left:0;top:508px;width:18px">23</div><div class="ln" style="left:0;top:531px;width:18px">24</div><div class="c" style="left:21px;top:531px"><i>//<u>脉冲周期测量电路</u></i></div><div class="ln" style="left:0;top:554px;width:18px">25</div><div class="c" style="left:21px;top:554px">pulse_period_ctrl i_pulse_period_ctrl(</div><div class="ln" style="left:0;top:577px;width:18px">26</div><div class="c" style="left:21px;top:577px">. clk(clk),<i>//<u>时钟</u>10M</i></div></div>
<div style="left:506px;top:700px;width:830px;height:16px;background:#e9e9e9"></div>
<div style="left:506px;top:700px;width:15px;height:16px;background:#ececec"></div>
<svg style="left:510px;top:703px" width="6" height="9" viewBox="0 0 6 9"><polygon points="5,0.500 5,8.500 0.500,4.500" fill="#404040"/></svg>
<svg style="left:465px;top:96px" width="15" height="15" viewBox="0 0 15 15"><path d="M0.5,0.500 h12 l2,2 v12 h-14z" fill="#9c9c9c"/><rect x="3" y="0.500" width="8" height="5" fill="#bdbdbd"/><rect x="8" y="1.200" width="2" height="3.300" fill="#9c9c9c"/><rect x="2.500" y="8" width="10" height="6.500" fill="#8d8d8d"/></svg>
<div style="left:466px;top:115px;width:14px;height:1px;background:#a0a0a0"></div>
<svg style="left:464px;top:122px" width="17" height="16" viewBox="0 0 17 16"><path d="M5,12.500 h4.500 a3.600,3.600 0 0 0 0,-7.200 h-3" fill="none" stroke="#9c9c9c" stroke-width="4"/><path d="M0.500,5.300 L7.500,0 V10.600z" fill="#9c9c9c"/></svg>
<svg style="left:464px;top:144px" width="17" height="16" viewBox="0 0 17 16"><path d="M12,12.500 h-4.500 a3.600,3.600 0 0 1 0,-7.200 h3" fill="none" stroke="#9c9c9c" stroke-width="4"/><path d="M16.500,5.300 L9.500,0 V10.600z" fill="#9c9c9c"/></svg>
<svg style="left:464px;top:165px" width="18" height="18" viewBox="0 0 18 18"><path d="M2,1 L12,11.500 M1,6 L11,10" stroke="#7f8ea6" stroke-width="1.600" stroke-linecap="round"/><ellipse cx="13.800" cy="8.500" rx="2.300" ry="1.900" fill="none" stroke="#dc2626" stroke-width="1.600" transform="rotate(25 13.800 8.500)"/><ellipse cx="10.500" cy="14" rx="1.900" ry="2.400" fill="none" stroke="#dc2626" stroke-width="1.600" transform="rotate(-20 10.500 14)"/></svg>
<svg style="left:464px;top:188px" width="17" height="17" viewBox="0 0 17 17"><path d="M0.5,0.500 h7 l3,3 v9 h-10z" fill="#f5f9ff" stroke="#5b83c8"/><path d="M5.500,4.500 h7 l3,3 v9 h-10z" fill="#f5f9ff" stroke="#5b83c8"/><path d="M7.500,9.500 h6 M7.500,11.500 h6 M7.500,13.500 h6" stroke="#5b83c8"/></svg>
<svg style="left:464px;top:210px" width="17" height="17" viewBox="0 0 17 17"><rect x="0.500" y="2.500" width="11" height="13" fill="#f4c254" stroke="#b98a24"/><rect x="3.500" y="0.500" width="5" height="4" fill="#d9d9d9" stroke="#8a8a8a"/><path d="M6.500,6.500 h6 l3,3 v7 h-9z" fill="#f5f9ff" stroke="#5b83c8"/><path d="M8.500,11.500 h5 M8.500,13.500 h5" stroke="#5b83c8"/></svg>
<svg style="left:465px;top:232px" width="15" height="15" viewBox="0 0 15 15"><path d="M2,2 L13,13 M13,2 L2,13" stroke="#e02626" stroke-width="2.600" stroke-linecap="round"/></svg>
<div style="left:466px;top:252px;width:14px;height:1px;background:#a0a0a0"></div>
<svg style="left:466px;top:259px" width="11" height="15" viewBox="0 0 11 15"><path d="M4.500,0.500 L1.500,14.500 M8.800,0.500 L5.800,14.500" stroke="#1a1a1a" stroke-width="1.300"/></svg>
<svg style="left:464px;top:280px" width="17" height="17" viewBox="0 0 17 17"><rect x="0" y="0" width="16" height="17" fill="#fff"/><rect x="4.500" y="2" width="7" height="13" fill="#7c9ceb"/><path d="M0,1 h16 M0,4.500 h16 M0,8.500 h16 M0,12.500 h16 M0,16 h16" stroke="#111" stroke-width="1.200" stroke-dasharray="2.500 1.200"/><rect x="5.500" y="3" width="5" height="11" fill="#7c9ceb" opacity="0.850"/></svg>
<svg style="left:463px;top:302px" width="18" height="17" viewBox="0 0 18 17"><rect x="5.500" y="0.500" width="11" height="13" fill="#eaf2fd" stroke="#5b83c8"/><path d="M8,4.500 h6 M8,7.500 h6" stroke="#5b83c8"/><circle cx="4" cy="12.500" r="3.300" fill="#7d8fa6" stroke="#3c4c63"/><circle cx="10.500" cy="12.500" r="3.300" fill="#7d8fa6" stroke="#3c4c63"/><path d="M3,9 l1.500,-4 h2 M10,9 l-1,-4" stroke="#3c4c63" fill="none" stroke-width="1.400"/></svg>
<div style="left:466px;top:322px;width:14px;height:1px;background:#a0a0a0"></div>
<svg style="left:466px;top:329px" width="13" height="18" viewBox="0 0 13 18"><path d="M6,0.700 a5,5.200 0 0 1 2.600,9.700 v2 h-5.200 v-2 a5,5.200 0 0 1 2.600,-9.700z" fill="#fbe56a" stroke="#d9a91e"/><path d="M3.500,13 h5 l-2.500,4.500z" fill="#6aa3e8" stroke="#3f78d0" stroke-width="0.800"/></svg>
<svg style="left:464px;top:352px" width="17" height="17" viewBox="0 0 17 17"><path d="M3,3 c2,-3 8,-3 10,0 c3,1 3,5 1,7 v6 h-11 v-6 c-2,-2 -2,-6 0,-7z" fill="#9c9c9c"/><path d="M6,8 h4 v5 h-4z" fill="#b8b8b8"/></svg>
<!-- runs -->
<div style="left:893px;top:721px;width:37px;height:2px;background-image:linear-gradient(90deg,#a8a8a8 50%,transparent 50%);background-size:4px 2px"></div>
<div style="left:58px;top:728px;width:1275px;height:20px;background:linear-gradient(#fbfbfb,#f4f4f4 50%,#e2e2e2)"></div>
<div class="t" style="left:64px;top:734px;">Design Runs</div>
<svg style="left:62px;top:752px" width="17" height="17" viewBox="0 0 17 17"><path d="M9,9 L15.500,15.500" stroke="#cf3a2a" stroke-width="2.200" stroke-linecap="round"/><circle cx="6" cy="6" r="4.800" fill="#a6cef8" stroke="#5f97e2" stroke-width="1.400"/><ellipse cx="5" cy="4.800" rx="2.800" ry="2.400" fill="#e4f1ff"/></svg>
<svg style="left:63px;top:774px" width="16" height="16" viewBox="0 0 16 16"><rect x="0.500" y="0.500" width="15" height="4" fill="#fde9ae" stroke="#e0962a"/><rect x="0.500" y="10.500" width="15" height="4" fill="#fde9ae" stroke="#e0962a"/><polygon points="3,2 13,2 8,7" fill="#2fc12f" stroke="#1d961d" stroke-width="0.600"/><polygon points="3,13 13,13 8,8" fill="#2fc12f" stroke="#1d961d" stroke-width="0.600"/></svg>
<svg style="left:63px;top:796px" width="16" height="16" viewBox="0 0 16 16"><rect x="0.500" y="2.500" width="15" height="4" fill="#fde9ae" stroke="#e0962a"/><rect x="0.500" y="8.500" width="15" height="4" fill="#fde9ae" stroke="#e0962a"/><polygon points="3.500,4.500 12.500,4.500 8,0.300" fill="#2fc12f" stroke="#1d961d" stroke-width="0.600"/><polygon points="3.500,10.500 12.500,10.500 8,14.800" fill="#2fc12f" stroke="#1d961d" stroke-width="0.600"/></svg>
<svg style="left:63px;top:819px" width="16" height="15" viewBox="0 0 16 15"><polygon points="7,0.500 15.500,7.500 7,14.500" fill="#a0a0a0"/><path d="M1,3.500 h6 M0,6.500 h7 M0,9.500 h7 M1,12.500 h6" stroke="#a8a8a8"/></svg>
<svg style="left:63px;top:840px" width="15" height="13" viewBox="0 0 15 13"><rect x="1" y="0" width="2.500" height="13" fill="#a0a0a0"/><polygon points="14,0 14,13 4.500,7" fill="#a0a0a0"/></svg>
<div style="left:82px;top:748px;width:1252px;height:110px;background:#fff;border:1px solid #a3a3a3"></div>
<div style="left:83px;top:758px;width:1250px;height:14px;background:linear-gradient(#f7f7f7,#f1f1f1 60%,#e6e6e6)"></div>
<div style="left:83px;top:772px;width:1250px;height:1px;background:#d4d4d4"></div>
<div style="left:83px;top:773px;width:1250px;height:1px;background:#ffffff"></div>
<div style="left:83px;top:791px;width:1250px;height:16px;background:#eeeeee"></div>
<div class="t" style="left:88px;top:759px;">Name</div>
<div class="t" style="left:288px;top:759px;">Constraints</div>
<div style="left:281px;top:750px;width:1px;height:23px;background:#ffffff"></div>
<div style="left:282px;top:750px;width:1px;height:23px;background:#dedede"></div>
<div style="left:283px;top:750px;width:1px;height:23px;background:#ffffff"></div>
<div style="left:282px;top:774px;width:1px;height:33px;background:#e4e4e4"></div>
<div style="left:283px;top:791px;width:1px;height:16px;background:#fafafa"></div>
<div class="t" style="left:378px;top:759px;">Status</div>
<div style="left:371px;top:750px;width:1px;height:23px;background:#ffffff"></div>
<div style="left:372px;top:750px;width:1px;height:23px;background:#dedede"></div>
<div style="left:373px;top:750px;width:1px;height:23px;background:#ffffff"></div>
<div style="left:372px;top:774px;width:1px;height:33px;background:#e4e4e4"></div>
<div style="left:373px;top:791px;width:1px;height:16px;background:#fafafa"></div>
<div class="t" style="left:540px;top:759px;">WNS</div>
<div style="left:533px;top:750px;width:1px;height:23px;background:#ffffff"></div>
<div style="left:534px;top:750px;width:1px;height:23px;background:#dedede"></div>
<div style="left:535px;top:750px;width:1px;height:23px;background:#ffffff"></div>
<div style="left:534px;top:774px;width:1px;height:33px;background:#e4e4e4"></div>
<div style="left:535px;top:791px;width:1px;height:16px;background:#fafafa"></div>
<div class="t" style="left:580px;top:759px;">TNS</div>
<div style="left:573px;top:750px;width:1px;height:23px;background:#ffffff"></div>
<div style="left:574px;top:750px;width:1px;height:23px;background:#dedede"></div>
<div style="left:575px;top:750px;width:1px;height:23px;background:#ffffff"></div>
<div style="left:574px;top:774px;width:1px;height:33px;background:#e4e4e4"></div>
<div style="left:575px;top:791px;width:1px;height:16px;background:#fafafa"></div>
<div class="t" style="left:620px;top:759px;">WHS</div>
<div style="left:613px;top:750px;width:1px;height:23px;background:#ffffff"></div>
<div style="left:614px;top:750px;width:1px;height:23px;background:#dedede"></div>
<div style="left:615px;top:750px;width:1px;height:23px;background:#ffffff"></div>
<div style="left:614px;top:774px;width:1px;height:33px;background:#e4e4e4"></div>
<div style="left:615px;top:791px;width:1px;height:16px;background:#fafafa"></div>
<div class="t" style="left:660px;top:759px;">THS</div>
<div style="left:653px;top:750px;width:1px;height:23px;background:#ffffff"></div>
<div style="left:654px;top:750px;width:1px;height:23px;background:#dedede"></div>
<div style="left:655px;top:750px;width:1px;height:23px;background:#ffffff"></div>
<div style="left:654px;top:774px;width:1px;height:33px;background:#e4e4e4"></div>
<div style="left:655px;top:791px;width:1px;height:16px;background:#fafafa"></div>
<div class="t" style="left:699px;top:759px;">TPWS</div>
<div style="left:692px;top:750px;width:1px;height:23px;background:#ffffff"></div>
<div style="left:693px;top:750px;width:1px;height:23px;background:#dedede"></div>
<div style="left:694px;top:750px;width:1px;height:23px;background:#ffffff"></div>
<div style="left:693px;top:774px;width:1px;height:33px;background:#e4e4e4"></div>
<div style="left:694px;top:791px;width:1px;height:16px;background:#fafafa"></div>
<div class="t" style="left:746px;top:759px;">Failed Routes</div>
<div style="left:739px;top:750px;width:1px;height:23px;background:#ffffff"></div>
<div style="left:740px;top:750px;width:1px;height:23px;background:#dedede"></div>
<div style="left:741px;top:750px;width:1px;height:23px;background:#ffffff"></div>
<div style="left:740px;top:774px;width:1px;height:33px;background:#e4e4e4"></div>
<div style="left:741px;top:791px;width:1px;height:16px;background:#fafafa"></div>
<div class="t" style="left:846px;top:759px;">LUT</div>
<div style="left:839px;top:750px;width:1px;height:23px;background:#ffffff"></div>
<div style="left:840px;top:750px;width:1px;height:23px;background:#dedede"></div>
<div style="left:841px;top:750px;width:1px;height:23px;background:#ffffff"></div>
<div style="left:840px;top:774px;width:1px;height:33px;background:#e4e4e4"></div>
<div style="left:841px;top:791px;width:1px;height:16px;background:#fafafa"></div>
<div class="t" style="left:886px;top:759px;">FF</div>
<div style="left:879px;top:750px;width:1px;height:23px;background:#ffffff"></div>
<div style="left:880px;top:750px;width:1px;height:23px;background:#dedede"></div>
<div style="left:881px;top:750px;width:1px;height:23px;background:#ffffff"></div>
<div style="left:880px;top:774px;width:1px;height:33px;background:#e4e4e4"></div>
<div style="left:881px;top:791px;width:1px;height:16px;background:#fafafa"></div>
<div class="t" style="left:919px;top:759px;">BRAM</div>
<div style="left:912px;top:750px;width:1px;height:23px;background:#ffffff"></div>
<div style="left:913px;top:750px;width:1px;height:23px;background:#dedede"></div>
<div style="left:914px;top:750px;width:1px;height:23px;background:#ffffff"></div>
<div style="left:913px;top:774px;width:1px;height:33px;background:#e4e4e4"></div>
<div style="left:914px;top:791px;width:1px;height:16px;background:#fafafa"></div>
<div class="t" style="left:965px;top:759px;">URAM</div>
<div style="left:958px;top:750px;width:1px;height:23px;background:#ffffff"></div>
<div style="left:959px;top:750px;width:1px;height:23px;background:#dedede"></div>
<div style="left:960px;top:750px;width:1px;height:23px;background:#ffffff"></div>
<div style="left:959px;top:774px;width:1px;height:33px;background:#e4e4e4"></div>
<div style="left:960px;top:791px;width:1px;height:16px;background:#fafafa"></div>
<div class="t" style="left:1012px;top:759px;">DSP</div>
<div style="left:1005px;top:750px;width:1px;height:23px;background:#ffffff"></div>
<div style="left:1006px;top:750px;width:1px;height:23px;background:#dedede"></div>
<div style="left:1007px;top:750px;width:1px;height:23px;background:#ffffff"></div>
<div style="left:1006px;top:774px;width:1px;height:33px;background:#e4e4e4"></div>
<div style="left:1007px;top:791px;width:1px;height:16px;background:#fafafa"></div>
<div class="t" style="left:1051px;top:759px;">Start</div>
<div style="left:1044px;top:750px;width:1px;height:23px;background:#ffffff"></div>
<div style="left:1045px;top:750px;width:1px;height:23px;background:#dedede"></div>
<div style="left:1046px;top:750px;width:1px;height:23px;background:#ffffff"></div>
<div style="left:1045px;top:774px;width:1px;height:33px;background:#e4e4e4"></div>
<div style="left:1046px;top:791px;width:1px;height:16px;background:#fafafa"></div>
<div class="t" style="left:1172px;top:759px;">Elapsed</div>
<div style="left:1165px;top:750px;width:1px;height:23px;background:#ffffff"></div>
<div style="left:1166px;top:750px;width:1px;height:23px;background:#dedede"></div>
<div style="left:1167px;top:750px;width:1px;height:23px;background:#ffffff"></div>
<div style="left:1166px;top:774px;width:1px;height:33px;background:#e4e4e4"></div>
<div style="left:1167px;top:791px;width:1px;height:16px;background:#fafafa"></div>
<div class="t" style="left:1235px;top:759px;">Strategy</div>
<div style="left:1228px;top:750px;width:1px;height:23px;background:#ffffff"></div>
<div style="left:1229px;top:750px;width:1px;height:23px;background:#dedede"></div>
<div style="left:1230px;top:750px;width:1px;height:23px;background:#ffffff"></div>
<div style="left:1229px;top:774px;width:1px;height:33px;background:#e4e4e4"></div>
<div style="left:1230px;top:791px;width:1px;height:16px;background:#fafafa"></div>
<svg style="left:86px;top:779px" width="9" height="9" viewBox="0 0 9 9"><rect x="0.5" y="0.5" width="8" height="8" fill="#fafafa" stroke="#8c8c8c"/><path d="M2,4.500 h5" stroke="#2f3f8f"/></svg>
<div style="left:96px;top:782px;width:4px;height:1px;background-image:linear-gradient(90deg,#9a9a9a 50%,transparent 50%);background-size:2px 1px"></div>
<svg style="left:101px;top:776px" width="13" height="13" viewBox="0 0 13 13"><path d="M1,6.500 L4.800,11.500 L12,1.500" fill="none" stroke="#1fb31f" stroke-width="2.800"/></svg>
<div class="t" style="left:118px;top:779px;">synth_1</div>
<div style="left:106px;top:791px;width:1px;height:8px;background-image:linear-gradient(#9a9a9a 50%,transparent 50%);background-size:1px 2px"></div>
<div style="left:106px;top:799px;width:10px;height:1px;background-image:linear-gradient(90deg,#9a9a9a 50%,transparent 50%);background-size:2px 1px"></div>
<svg style="left:117px;top:795px" width="13" height="11" viewBox="0 0 13 11"><path d="M0.500,3.500 h6 v-3 l6,5 l-6,5 v-3 h-6z" fill="#f4c542" stroke="#a67c1a"/></svg>
<div class="t" style="left:134px;top:795px;">impl_1</div>
<div class="t" style="left:286px;top:779px;">constrs_1</div>
<div class="t" style="left:286px;top:795px;">constrs_1</div>
<div class="t" style="left:376px;top:779px;">synth_design Complete!</div>
<div class="t" style="left:376px;top:795px;">Not started</div>
<div class="t" style="left:855px;top:779px;">1663</div>
<div class="t" style="left:894px;top:779px;">150</div>
<div class="t" style="left:952px;top:779px;">0</div>
<div class="t" style="left:999px;top:779px;">0</div>
<div class="t" style="left:1038px;top:779px;">0</div>
<div class="t" style="left:1068px;top:779px;">12/27/20 9:53 PM</div>
<div class="t" style="left:1180px;top:779px;">00:00:22</div>
<div class="t" style="left:1233px;top:779px;">Vivado Synthesis Defaults</div>
<div class="t" style="left:1233px;top:795px;">Vivado Implementation Defaults</div>
</div></body></html>
